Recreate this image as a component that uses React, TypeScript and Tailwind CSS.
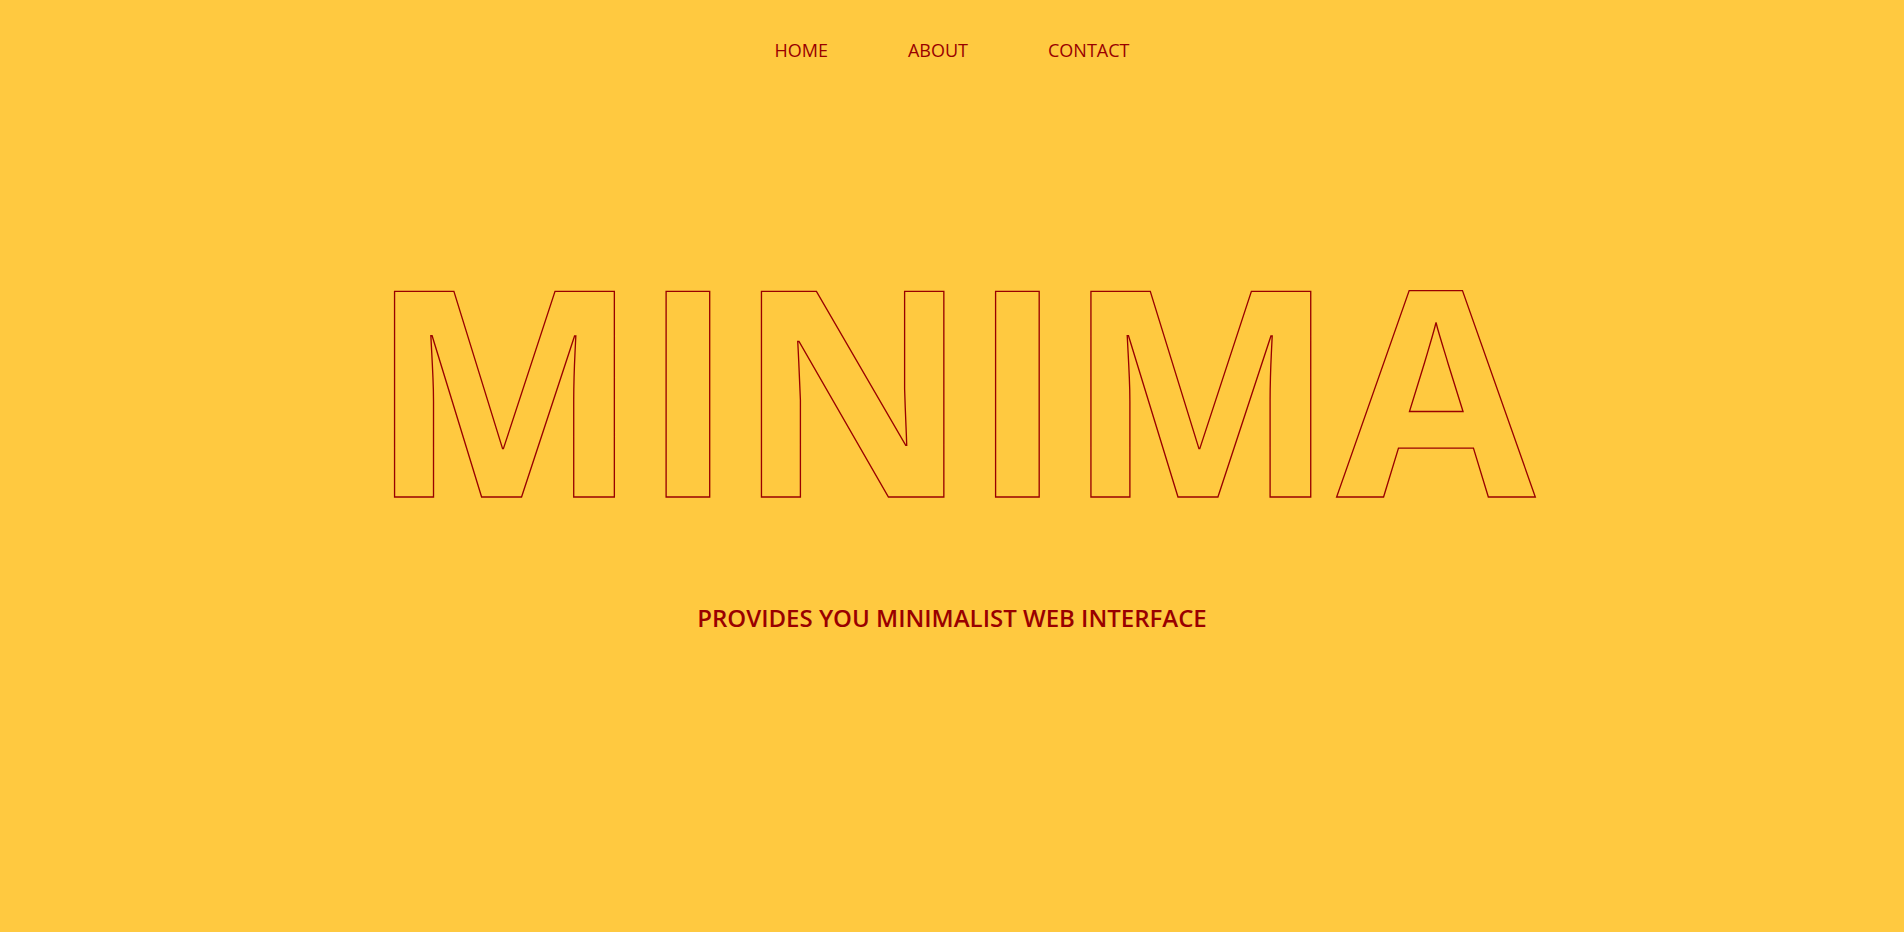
const links = ["HOME", "ABOUT", "CONTACT"];

export default function App() {
  return (
    <div className="flex min-h-screen flex-col items-center bg-[#ffc940] font-['Open_Sans',sans-serif] text-[#990000]">
      <nav className="flex justify-center gap-20 pt-[38px]" aria-label="Main">
        {links.map((label) => (
          <a key={label} href="#" className="text-lg leading-6">
            {label}
          </a>
        ))}
      </nav>
      <main className="flex flex-col items-center pt-[153px] text-center">
        <h1 className="text-[288px] leading-[340px] font-bold text-transparent [-webkit-text-stroke:1pt_#990000]">
          MINIMA
        </h1>
        <p className="mt-[45px] text-2xl leading-9 font-semibold">PROVIDES YOU MINIMALIST WEB INTERFACE</p>
      </main>
    </div>
  );
}
